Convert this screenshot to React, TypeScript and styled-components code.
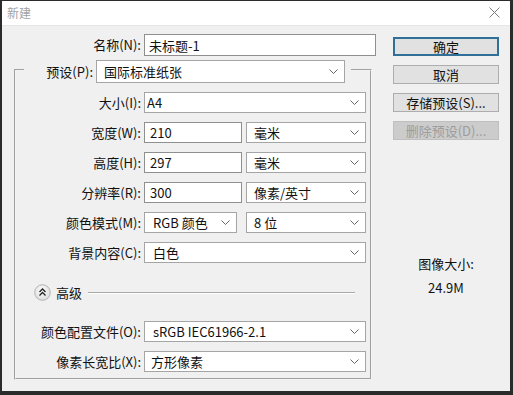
import styled, { createGlobalStyle } from "styled-components";

const GlobalStyle = createGlobalStyle`
  html, body {
    margin: 0;
    padding: 0;
    background: #2b2b2b;
  }
  * {
    box-sizing: border-box;
  }
`;

const FONT = `"Noto Sans CJK SC", "Microsoft YaHei", "Liberation Sans", sans-serif`;

function Chevron() {
  return (
    <svg width="9" height="5" viewBox="0 0 9 5">
      <polyline points="0.5,0.5 4.5,4.5 8.5,0.5" fill="none" stroke="#666" strokeWidth="1" />
    </svg>
  );
}

function AdvancedToggle() {
  return (
    <svg width="17" height="17" viewBox="0 0 17 17">
      <defs>
        <radialGradient id="adv" cx="0.45" cy="0.4" r="0.6">
          <stop offset="0" stopColor="#ffffff" />
          <stop offset="1" stopColor="#dcdcdc" />
        </radialGradient>
      </defs>
      <circle cx="8.5" cy="8.5" r="7.8" fill="url(#adv)" stroke="#b4b4b4" />
      <polyline points="5.5,8 8.5,5 11.5,8" fill="none" stroke="#222" strokeWidth="1.3" />
      <polyline points="5.5,11.5 8.5,8.5 11.5,11.5" fill="none" stroke="#222" strokeWidth="1.3" />
    </svg>
  );
}

function Select({ value, width, pad = 7 }: { value: string; width: number; pad?: number }) {
  return (
    <SelectBox $width={width} $pad={pad}>
      <span>{value}</span>
      <Chevron />
    </SelectBox>
  );
}

export default function App() {
  return (
    <>
      <GlobalStyle />
      <Window>
        <TitleBar>
          <Title>新建</Title>
          <CloseIcon viewBox="0 0 11 11">
            <line x1="0.5" y1="0.5" x2="10.5" y2="10.5" />
            <line x1="10.5" y1="0.5" x2="0.5" y2="10.5" />
          </CloseIcon>
        </TitleBar>
        <Body>
          <LeftColumn>
            <NameRow>
              <Label $width={127}>名称(N):</Label>
              <TextInput $width={232} $height={22} $pad={4}>未标题-1</TextInput>
            </NameRow>
            <Group>
              <Legend>
                <Label $width={69}>预设(P):</Label>
                <Select value="国际标准纸张" width={249} />
              </Legend>
              <Rows>
                <Row>
                  <Label $width={125}>大小(I):</Label>
                  <Select value="A4" width={222} pad={2} />
                </Row>
                <Row>
                  <Label $width={125}>宽度(W):</Label>
                  <TextInput $width={98} $height={21} $pad={5}>210</TextInput>
                  <Select value="毫米" width={120} />
                </Row>
                <Row>
                  <Label $width={125}>高度(H):</Label>
                  <TextInput $width={98} $height={21} $pad={5}>297</TextInput>
                  <Select value="毫米" width={120} />
                </Row>
                <Row>
                  <Label $width={125}>分辨率(R):</Label>
                  <TextInput $width={98} $height={21} $pad={5}>300</TextInput>
                  <Select value="像素/英寸" width={120} />
                </Row>
                <Row>
                  <Label $width={125}>颜色模式(M):</Label>
                  <Select value="RGB 颜色" width={93} pad={8} />
                  <Spacer $width={9} />
                  <Select value="8 位" width={120} />
                </Row>
                <Row>
                  <Label $width={125}>背景内容(C):</Label>
                  <Select value="白色" width={222} pad={8} />
                </Row>
              </Rows>
              <AdvancedRow>
                <AdvancedToggle />
                <AdvancedText>高级</AdvancedText>
                <EtchedLine />
              </AdvancedRow>
              <Rows>
                <Row>
                  <Label $width={125}>颜色配置文件(O):</Label>
                  <Select value="sRGB IEC61966-2.1" width={222} pad={8} />
                </Row>
                <Row>
                  <Label $width={125}>像素长宽比(X):</Label>
                  <Select value="方形像素" width={222} pad={6} />
                </Row>
              </Rows>
            </Group>
          </LeftColumn>
          <RightColumn>
            <Button $variant="default">确定</Button>
            <Button>取消</Button>
            <Button>存储预设(S)...</Button>
            <Button $variant="disabled">删除预设(D)...</Button>
            <SizeInfo>
              <span>图像大小:</span>
              <span>24.9M</span>
            </SizeInfo>
          </RightColumn>
        </Body>
      </Window>
    </>
  );
}

const Window = styled.div`
  width: 513px;
  height: 395px;
  display: flex;
  flex-direction: column;
  border-style: solid;
  border-color: #2b2b2b;
  border-width: 1px 3px 4px 2px;
  background: #f0f0f0;
  font-family: ${FONT};
  font-size: 13px;
  color: #111;
`;

const TitleBar = styled.div`
  display: flex;
  align-items: center;
  justify-content: space-between;
  height: 25px;
  flex: none;
  padding: 0 10px 2px 5px;
  background: #ffffff;
  border-bottom: 1px solid #e6e6e6;
`;

const Title = styled.span`
  color: #a3a3a3;
  font-size: 12px;
`;

const CloseIcon = styled.svg`
  width: 11px;
  height: 11px;
  stroke: #7c7c7c;
  stroke-width: 1;
`;

const Body = styled.div`
  flex: 1;
  display: flex;
  padding: 8px 0 0 12px;
`;

const LeftColumn = styled.div`
  display: flex;
  flex-direction: column;
  flex: none;
  width: 366px;
`;

const NameRow = styled.div`
  display: flex;
  align-items: center;
  height: 22px;
`;

const Label = styled.span<{ $width: number }>`
  flex: none;
  width: ${({ $width }) => $width}px;
  margin-right: 3px;
  text-align: right;
  white-space: nowrap;
  line-height: 16px;
`;

const TextInput = styled.div<{ $width: number; $height: number; $pad: number }>`
  display: flex;
  align-items: center;
  flex: none;
  width: ${({ $width }) => $width}px;
  height: ${({ $height }) => $height}px;
  padding-left: ${({ $pad }) => $pad}px;
  margin-right: 4px;
  border: 1px solid #8f8f8f;
  background: #ffffff;
  white-space: nowrap;
`;

const SelectBox = styled.div<{ $width: number; $pad: number }>`
  display: flex;
  align-items: center;
  justify-content: space-between;
  flex: none;
  width: ${({ $width }) => $width}px;
  height: 21px;
  padding: 0 6px 0 ${({ $pad }) => $pad}px;
  border: 1px solid #a5a5a5;
  background: #ffffff;
  white-space: nowrap;

  svg {
    flex: none;
  }
`;

const Spacer = styled.span<{ $width: number }>`
  flex: none;
  width: ${({ $width }) => $width}px;
`;

const Group = styled.fieldset`
  width: 358px;
  margin: 0;
  padding: 9px 0 6px;
  border: 2px groove #f4f4f4;
  min-inline-size: 0;
`;

const Legend = styled.legend`
  display: flex;
  align-items: center;
  margin-left: 8px;
  padding: 4px 6px 0 0;

  ${SelectBox} {
    height: 23px;
  }
`;

const Rows = styled.div`
  display: flex;
  flex-direction: column;
  gap: 9px;
`;

const Row = styled.div`
  display: flex;
  align-items: center;
  height: 21px;
`;

const AdvancedRow = styled.div`
  display: flex;
  align-items: center;
  height: 17px;
  margin: 21px 15px 20px 0;
  padding-left: 18px;
`;

const AdvancedText = styled.span`
  margin-left: 5px;
  line-height: 16px;
`;

const EtchedLine = styled.span`
  flex: 1;
  height: 2px;
  margin-left: 6px;
  border-top: 1px solid #a8a8a8;
  border-bottom: 1px solid #ffffff;
`;

const RightColumn = styled.div`
  display: flex;
  flex-direction: column;
  gap: 9px;
  flex: none;
  width: 106px;
  margin-left: 13px;
  padding-top: 3px;
`;

const Button = styled.div<{ $variant?: "default" | "disabled" }>`
  display: flex;
  align-items: center;
  justify-content: center;
  height: 19px;
  background: ${({ $variant }) => ($variant === "disabled" ? "#cccccc" : "#e1e1e1")};
  border: ${({ $variant }) =>
    $variant === "default" ? "2px solid #2f6f98" : $variant === "disabled" ? "1px solid #bfbfbf" : "1px solid #adadad"};
  color: ${({ $variant }) => ($variant === "disabled" ? "#9c9c9c" : "#111")};
  white-space: nowrap;
  line-height: 16px;
`;

const SizeInfo = styled.div`
  display: flex;
  flex-direction: column;
  align-items: center;
  gap: 8px;
  margin-top: 107px;
  line-height: 16px;
`;
